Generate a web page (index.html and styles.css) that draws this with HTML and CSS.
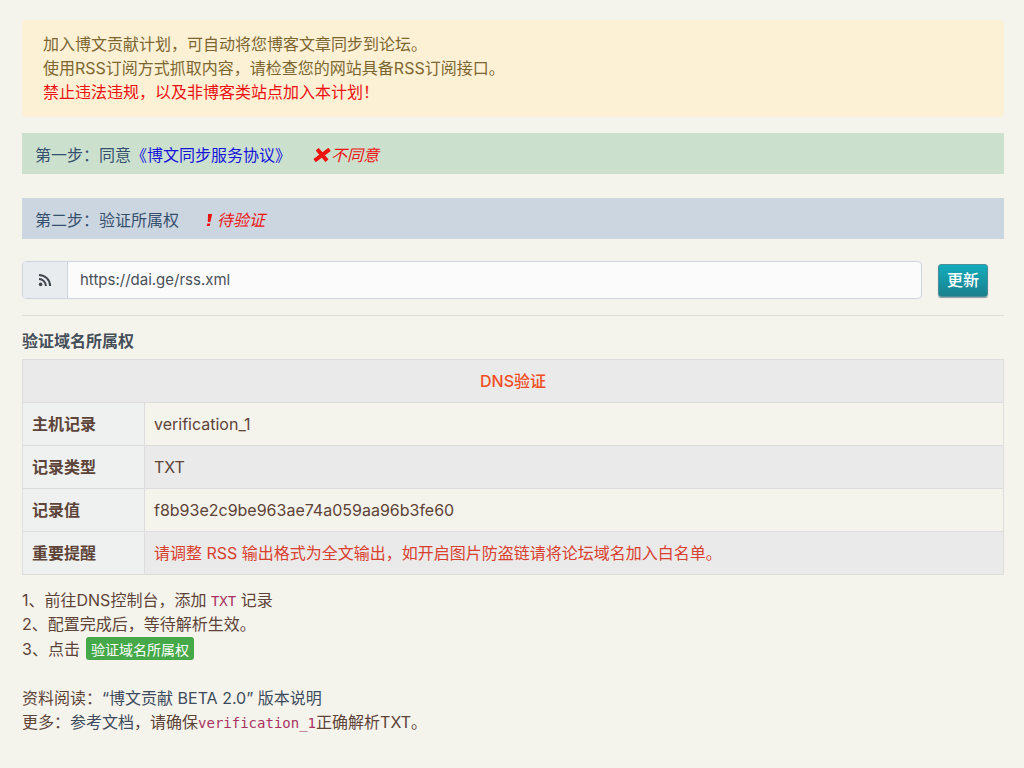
FILE: index.html
```
<!DOCTYPE html>
<html lang="zh-CN">
<head>
    <meta charset="UTF-8">
    <meta name="viewport" content="width=device-width, initial-scale=1.0">
    <title>博文贡献计划</title>
    <link rel="stylesheet" href="styles.css">
</head>
<body>
    <main class="container">
        <div class="alert">
            加入博文贡献计划，可自动将您博客文章同步到论坛。<br>
            使用RSS订阅方式抓取内容，请检查您的网站具备RSS订阅接口。<br>
            <span class="forbid">禁止违法违规，以及非博客类站点加入本计划！</span>
        </div>

        <div class="step step-agree">
            <span>第一步：同意<a class="agreement" href="#">《博文同步服务协议》</a></span>
            <em class="status">
                <svg class="icon-times" viewBox="0 0 18 14" aria-hidden="true"><path d="M4.2 1.2L14 12.8M16.6 1.4L1.6 12.6"/></svg>不同意
            </em>
        </div>

        <div class="step step-verify">
            <span>第二步：验证所属权</span>
            <em class="status">
                <svg class="icon-mark" viewBox="-4 0 16 14" aria-hidden="true"><path d="M5 1h4.2L7.4 9H4.8zM4.3 10.4h3l-.6 2.7H3.7z"/></svg>待验证
            </em>
        </div>

        <form class="rss-form" onsubmit="return false">
            <div class="input-group">
                <label class="input-icon" for="rssUrl" aria-label="RSS">
                    <svg class="icon-rss" viewBox="0 0 14 14" aria-hidden="true">
                        <circle cx="2.6" cy="11.4" r="1.8"/>
                        <path d="M1 6.1a7 7 0 0 1 6.9 6.9M1 1.9A11.1 11.1 0 0 1 12.1 13"/>
                    </svg>
                </label>
                <input id="rssUrl" type="text" value="https://dai.ge/rss.xml">
            </div>
            <button class="updateBtn" type="submit">更新</button>
        </form>

        <hr>

        <h2 id="verifyTitle">验证域名所属权</h2>
        <table class="records" aria-labelledby="verifyTitle">
            <thead>
                <tr><th class="dns" colspan="2">DNS验证</th></tr>
            </thead>
            <tbody>
                <tr><th scope="row">主机记录</th><td>verification_1</td></tr>
                <tr><th scope="row">记录类型</th><td>TXT</td></tr>
                <tr><th scope="row">记录值</th><td>f8b93e2c9be963ae74a059aa96b3fe60</td></tr>
                <tr><th scope="row">重要提醒</th><td class="warn">请调整 RSS 输出格式为全文输出，如开启图片防盗链请将论坛域名加入白名单。</td></tr>
            </tbody>
        </table>

        <div class="guide">
            <div>1、前往DNS控制台，添加 <code>TXT</code> 记录</div>
            <div>2、配置完成后，等待解析生效。</div>
            <div class="guide-action">3、点击 <button class="verifyBtn" type="button">验证域名所属权</button></div>
        </div>

        <div class="more">
            <div>资料阅读：<a href="#">“博文贡献 BETA 2.0” 版本说明</a></div>
            <div>更多：<a href="#">参考文档</a>，请确保<code>verification_1</code>正确解析TXT。</div>
        </div>
    </main>
</body>
</html>
```
FILE: styles.css
```
body {
    font-family: Inter, 'Noto Sans CJK SC', sans-serif;
    font-size: 16px;
    line-height: 24px;
    color: #5d4338;
    background-color: #f5f4ec;
    margin: 0;
}

.container {
    padding: 20px 20px 32px 22px;
}

a {
    color: #3d4b5c;
    text-decoration: none;
}

.alert {
    padding: 12px 21px 13px;
    margin-bottom: 16px;
    border-radius: 4px;
    color: #7d6630;
    background-color: #fcf1d5;
}

.forbid {
    color: #ec1010;
}

.step {
    display: flex;
    gap: 20px;
    padding: 10px 13px 7px;
    margin-bottom: 24px;
    color: #35506e;
}

.step-agree {
    background-color: #cce0ce;
}

.step-verify {
    margin-bottom: 22px;
    background-color: #ccd6e0;
}

.agreement {
    color: #1414dc;
}

.status {
    display: flex;
    align-items: center;
    color: #ec1313;
}

.icon-times {
    width: 18px;
    height: 14px;
    margin-left: 2px;
    fill: none;
    stroke: currentColor;
    stroke-width: 4;
}

.icon-mark {
    width: 16px;
    height: 14px;
    margin-right: 2px;
    fill: currentColor;
}

.rss-form {
    display: flex;
    align-items: center;
    padding-right: 16px;
}

.input-group {
    display: flex;
    flex: 1;
    height: 36px;
    margin-right: 16px;
    border: 1px solid #ccd5dd;
    border-radius: 4px;
    overflow: hidden;
    background-color: #fbfbfb;
}

.input-icon {
    display: flex;
    align-items: center;
    justify-content: center;
    width: 44px;
    border-right: 1px solid #ccd5dd;
    color: #3f464e;
    background-color: #e9ecef;
}

.icon-rss {
    width: 14px;
    height: 14px;
    fill: currentColor;
}

.icon-rss path {
    fill: none;
    stroke: currentColor;
    stroke-width: 2;
}

.input-group input {
    flex: 1;
    min-width: 0;
    padding: 0 12px;
    border: none;
    outline: none;
    font: inherit;
    font-size: 15px;
    color: #495057;
    background: none;
}

.updateBtn {
    height: 33px;
    padding: 0 8px;
    border: 1px solid #4b8d99;
    border-radius: 3px;
    font: inherit;
    font-weight: 500;
    color: #ffffff;
    background: linear-gradient(#12acbb, #1b808e);
    box-shadow: 0 1px 1px #8a9ca4;
    cursor: pointer;
}

hr {
    height: 1px;
    margin: 16px 0 13px;
    border: none;
    background-color: #dcdcd8;
}

h2 {
    margin: 0 0 6px;
    font-size: 16px;
    font-weight: 600;
    color: #454f5a;
}

.records {
    width: 100%;
    border-collapse: collapse;
}

.records th,
.records td {
    padding: 9px;
    border: 1px solid #dcdddc;
    text-align: left;
}

.records th {
    width: 103px;
    font-weight: 600;
    background-color: #eff1f0;
}

.records .dns {
    text-align: center;
    font-weight: 500;
    color: #f04d22;
    background-color: #eaeaea;
}

.records tr:nth-child(even) td {
    background-color: #eaeaea;
}

.records .warn {
    color: #d9402f;
}

code {
    font-family: 'DejaVu Sans Mono', monospace;
    font-size: 14px;
    line-height: 16px;
    color: #a83262;
}

.guide {
    margin: 13px 0 25px;
}

.guide-action {
    display: flex;
    align-items: center;
    gap: 6px;
    height: 25px;
}

.verifyBtn {
    height: 23px;
    padding: 0 5px;
    border: none;
    border-radius: 3px;
    font-family: inherit;
    font-size: 14px;
    color: #ffffff;
    background-color: #45a849;
    cursor: pointer;
}
```
